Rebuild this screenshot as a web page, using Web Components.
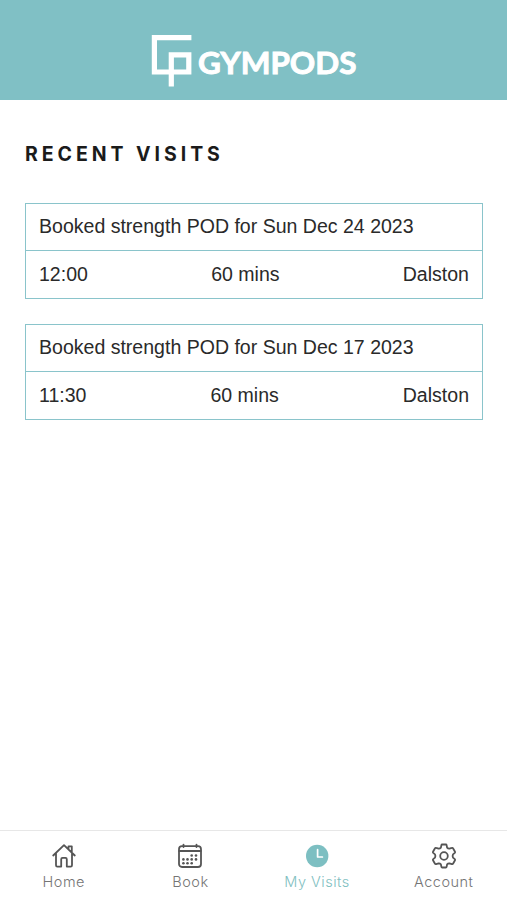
<!DOCTYPE html>
<html lang="en">
<head>
<meta charset="utf-8">
<title>Gympods</title>
<style>
html, body { margin: 0; height: 100%; background: #fff; }
body { font-family: "Liberation Sans", Arial, sans-serif; }
</style>
</head>
<body>
<gym-app></gym-app>
<script>
class BrandHeader extends HTMLElement {
  connectedCallback() {
    this.attachShadow({ mode: 'open' }).innerHTML = `
<style>
:host { display: block; height: 99.5px; background: #80c0c5; flex: none; }
svg { display: block; }
text { font: 700 30px Lato, sans-serif; fill: #fff; stroke: #fff; stroke-width: .9px; }
</style>
<svg width="507" height="99" viewBox="0 0 507 99">
<path d="M191.4 37.6H154.4V72H188.8V54.9H171.3V86.4" fill="none" stroke="#fff" stroke-width="5.2"/>
<text x="198" y="74.2" textLength="158.5" lengthAdjust="spacingAndGlyphs">GYMPODS</text>
</svg>`;
  }
}
customElements.define('brand-header', BrandHeader);

class VisitCard extends HTMLElement {
  connectedCallback() {
    this.attachShadow({ mode: 'open' }).innerHTML = `
<style>
:host { display: block; height: 96px; box-sizing: border-box; border: 1px solid #8ac4cb; color: #2a2a2a; font-size: 19.54px; }
div { display: flex; align-items: center; justify-content: space-between; height: 47px; padding: 0 13px; box-sizing: border-box; white-space: pre; }
.title { padding-bottom: 1px; border-bottom: 1px solid #8ac4cb; }
</style>
<div class="title"><slot name="title"></slot></div>
<div><slot name="time"></slot><slot name="duration"></slot><slot name="place"></slot></div>`;
  }
}
customElements.define('visit-card', VisitCard);

const icons = {
  home: `<path d="M2.2 12.5 13 2.2 23.8 12.5M5 10.3V22.3Q5 23.6 6.3 23.6H10.2V16.2Q10.2 14.9 11.5 14.9H14.5Q15.8 14.9 15.8 16.2V23.6H19.7Q21 23.6 21 22.3V10.3M17.5 6V3.3H20.8V9.5"/>`,
  calendar: `<rect x="2" y="3.2" width="22" height="20.8" rx="3"/><path d="M2.2 8H23.8M6.5 1.6V4M19.5 1.6V4"/><g fill="currentColor" stroke="none"><circle cx="14.7" cy="12.5" r="1.3"/><circle cx="19" cy="12.5" r="1.3"/><circle cx="6.4" cy="16.4" r="1.3"/><circle cx="10.5" cy="16.4" r="1.3"/><circle cx="14.7" cy="16.4" r="1.3"/><circle cx="19" cy="16.4" r="1.3"/><circle cx="6.4" cy="20.2" r="1.3"/><circle cx="10.5" cy="20.2" r="1.3"/><circle cx="14.7" cy="20.2" r="1.3"/></g>`,
  clock: `<circle cx="13.2" cy="13" r="11.2" fill="#7dbfc2" stroke="none"/><path d="M13.6 6.7V14H18.4" stroke="#fff" stroke-width="1.7"/>`,
  gear: `<path d="M11.1 1.5H14.9Q15.5 1.5 15.6 2.1L16.1 4.6Q17 5.7 18.4 5.6L20.9 4.9Q21.6 4.6 22 5.2L24 8.7Q24.3 9.4 23.8 9.9L22 11.4Q21.2 13 22 14.6L23.8 16.1Q24.3 16.6 24 17.3L22 20.8Q21.6 21.4 20.9 21.1L18.4 20.4Q17 20.3 16.1 21.4L15.6 23.9Q15.5 24.5 14.9 24.5H11.1Q10.5 24.5 10.4 23.9L9.9 21.4Q9 20.3 7.6 20.4L5.1 21.1Q4.4 21.4 4 20.8L2 17.3Q1.7 16.6 2.2 16.1L4 14.6Q4.8 13 4 11.4L2.2 9.9Q1.7 9.4 2 8.7L4 5.2Q4.4 4.6 5.1 4.9L7.6 5.6Q9 5.7 9.9 4.6L10.4 2.1Q10.5 1.5 11.1 1.5Z"/><circle cx="13" cy="13" r="3.8"/>`
};
class NavTab extends HTMLElement {
  connectedCallback() {
    this.attachShadow({ mode: 'open' }).innerHTML = `
<style>
:host { display: flex; flex: 1 1 0; min-width: 0; flex-direction: column; align-items: center; padding-top: 12px; box-sizing: border-box; color: #757575; font: 300 14.5px/20px Inter, sans-serif; letter-spacing: .5px; }
:host([active]) { color: #7fc0c1; }
svg { color: #555; fill: none; stroke: currentColor; stroke-width: 1.8; stroke-linejoin: round; stroke-linecap: round; margin-bottom: 3px; }
span { white-space: nowrap; }
</style>
<svg width="26" height="26" viewBox="0 0 26 26">${icons[this.getAttribute('icon')]}</svg><span><slot></slot></span>`;
  }
}
customElements.define('nav-tab', NavTab);

class GymApp extends HTMLElement {
  connectedCallback() {
    this.attachShadow({ mode: 'open' }).innerHTML = `
<style>
:host { display: flex; flex-direction: column; height: 900px; width: 507px; overflow: hidden; }
main { flex: 1; padding: 42.5px 24px 0 25px; }
h1 { margin: 0 0 37px; font: 700 19.5px/24px Inter, sans-serif; letter-spacing: 3.95px; color: #1b1b1b; }
visit-card + visit-card { margin-top: 25px; }
nav { display: flex; flex: none; height: 70px; box-sizing: border-box; border-top: 1px solid #e7e7e7; background: #fff; padding-left: .5px; }
</style>
<brand-header></brand-header>
<main>
<h1>RECENT VISITS</h1>
<visit-card><span slot="title">Booked strength POD for Sun Dec 24 2023</span><span slot="time">12:00</span><span slot="duration">60 mins</span><span slot="place">Dalston</span></visit-card>
<visit-card><span slot="title">Booked strength POD for Sun Dec 17 2023</span><span slot="time">11:30</span><span slot="duration">60 mins</span><span slot="place">Dalston</span></visit-card>
</main>
<nav><nav-tab icon="home">Home</nav-tab><nav-tab icon="calendar">Book</nav-tab><nav-tab icon="clock" active>My Visits</nav-tab><nav-tab icon="gear">Account</nav-tab></nav>`;
  }
}
customElements.define('gym-app', GymApp);
</script>
</body>
</html>
